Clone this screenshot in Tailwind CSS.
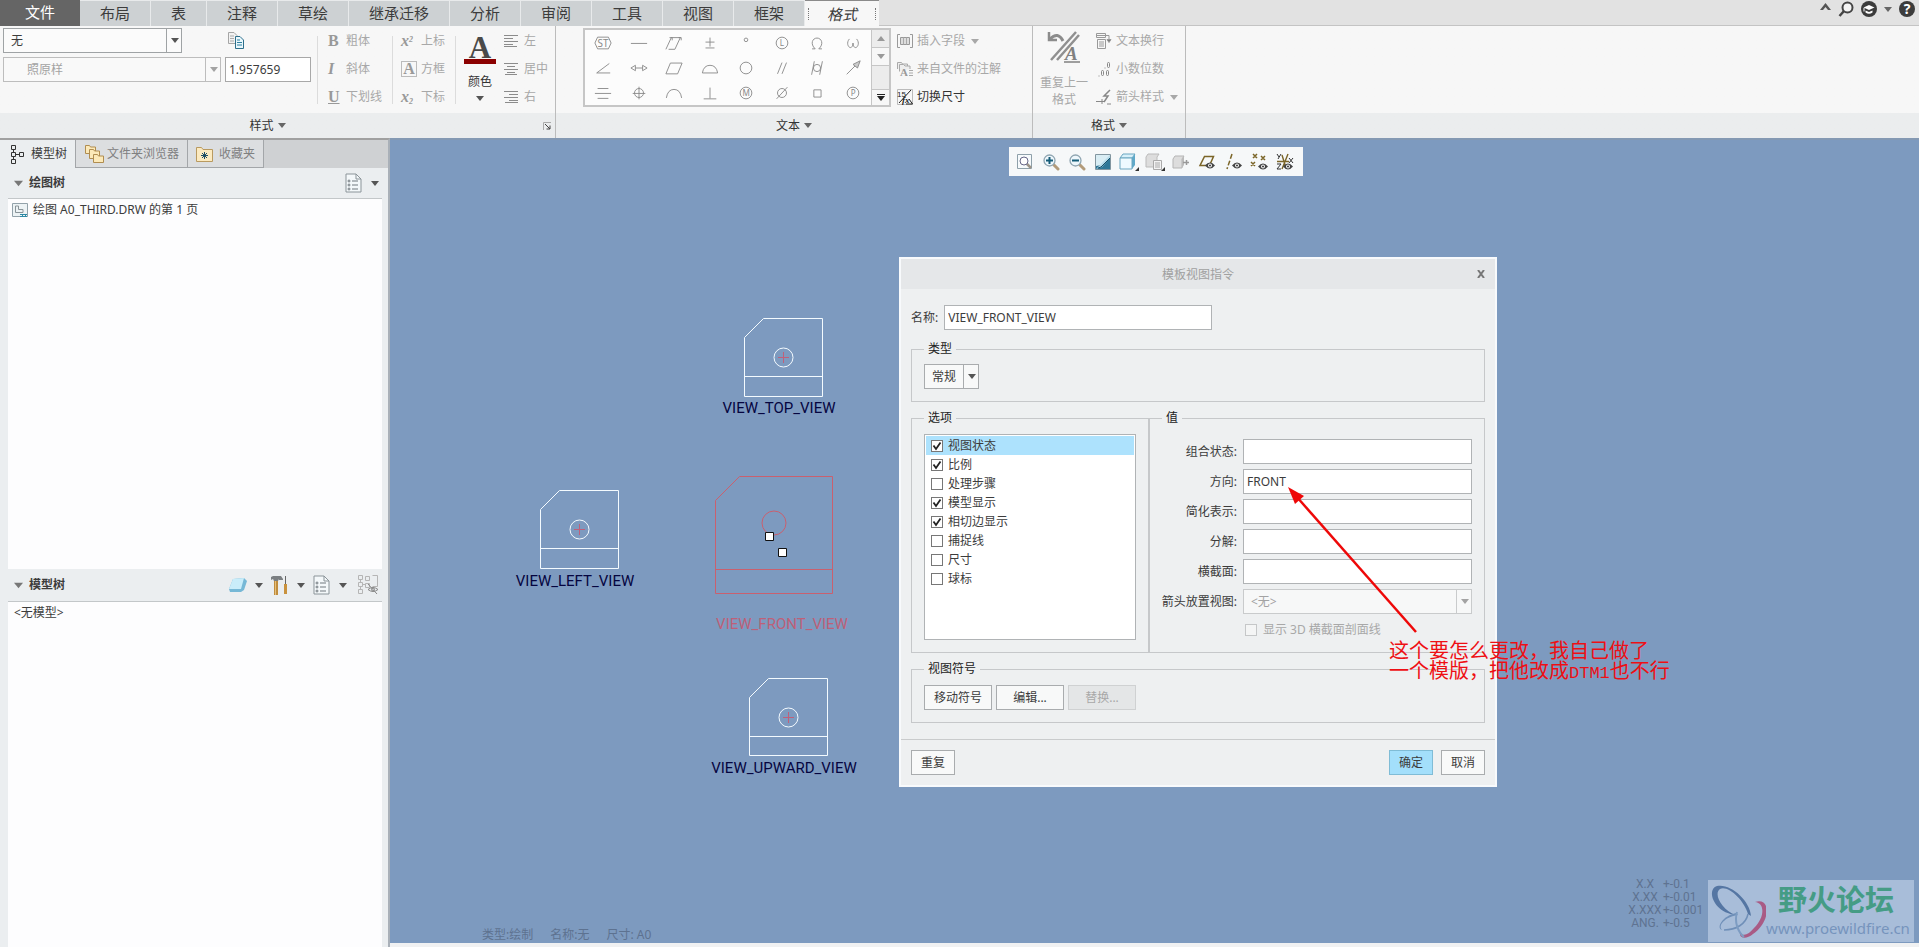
<!DOCTYPE html>
<html lang="zh-CN">
<head>
    <meta charset="UTF-8">
    <meta name="viewport" content="width=device-width, initial-scale=1.0">
    <title>模板视图指令</title>
    <script src="https://cdn.jsdelivr.net/npm/@tailwindcss/browser@4"></script>
</head>
<body class="flex h-screen flex-col overflow-hidden bg-[#f7f7f7] font-['Noto_Sans','Noto_Sans_CJK_SC',sans-serif] text-xs leading-4 text-[#3c3c3c]">

    <!-- Shared symbols -->
    <svg class="hidden">
        <symbol id="caret" viewBox="0 0 8 5"><path d="M0 0h8L4 5z" fill="currentColor"/></symbol>
        <symbol id="tick" viewBox="0 0 12 12"><path d="M2.500 5.500 5 9l4.500-6.500" fill="none" stroke="#222" stroke-width="1.800"/></symbol>
        <symbol id="eye" viewBox="0 0 10 7"><path d="M0 3.500Q5-2.500 10 3.500Q5 9.500 0 3.500z" fill="#444"/><circle cx="5" cy="3.500" r="1.900" fill="#fff"/><circle cx="5" cy="3.500" r="1" fill="#333"/></symbol>
        <symbol id="sheet" viewBox="0 0 17 20"><path d="M1 1h10l5 5v13H1z" fill="#f4f8fa" stroke="#8b9499"/><path d="M11 1v5h5" fill="none" stroke="#8b9499"/><path d="M7 8h6M7 12h6M7 16h6" stroke="#70797e"/><g fill="none" stroke="#70797e"><circle cx="4" cy="8" r="1"/><circle cx="4" cy="12" r="1"/><circle cx="4" cy="16" r="1"/></g></symbol>
        <symbol id="lens" viewBox="0 0 18 18"><path d="m11 11 5 5" stroke="#b39b7a" stroke-width="3" stroke-linecap="round"/><circle cx="7.500" cy="7.500" r="5.500" fill="#eef7fc" stroke="#8fa5b1" stroke-width="1.300"/></symbol>
    </svg>

    <!-- Ribbon tabs -->
    <nav class="flex h-[26px] shrink-0 bg-[#e2e2e2] text-[15px] leading-6">
        <a href="#" class="w-20 bg-[#656565] text-center text-white">文件</a>
        <a href="#" class="w-[71px] border-t border-r border-[#e8eaeb] bg-[#cdd1d3] text-center">布局</a>
        <a href="#" class="w-14 border-t border-r border-[#e8eaeb] bg-[#cdd1d3] text-center">表</a>
        <a href="#" class="w-[71px] border-t border-r border-[#e8eaeb] bg-[#cdd1d3] text-center">注释</a>
        <a href="#" class="w-[71px] border-t border-r border-[#e8eaeb] bg-[#cdd1d3] text-center">草绘</a>
        <a href="#" class="w-[101px] border-t border-r border-[#e8eaeb] bg-[#cdd1d3] text-center">继承迁移</a>
        <a href="#" class="w-[71px] border-t border-r border-[#e8eaeb] bg-[#cdd1d3] text-center">分析</a>
        <a href="#" class="w-[71px] border-t border-r border-[#e8eaeb] bg-[#cdd1d3] text-center">审阅</a>
        <a href="#" class="w-[71px] border-t border-r border-[#e8eaeb] bg-[#cdd1d3] text-center">工具</a>
        <a href="#" class="w-[71px] border-t border-r border-[#e8eaeb] bg-[#cdd1d3] text-center">视图</a>
        <a href="#" class="w-[71px] border-t border-r border-[#e8eaeb] bg-[#cdd1d3] text-center">框架</a>
        <a href="#" class="flex w-[74px] items-center justify-between border-t border-[#8a8a8a] bg-[#f7f7f7] px-[3px] italic">
            <span class="h-3 border-l border-dotted border-[#777]"></span>格式<span class="h-3 border-l border-dotted border-[#777]"></span>
        </a>
        <div class="flex flex-1 items-start justify-end gap-[7px] border-b border-[#c4c4c4] pt-px pr-1">
            <button aria-label="最小化功能区" class="pt-[2px]"><svg class="h-[7px] w-[11px]" viewBox="0 0 11 7"><path d="M0 7 5.500 0 11 7H8L5.500 4 3 7z" fill="#555"/></svg></button>
            <button aria-label="搜索"><svg class="size-4" viewBox="0 0 16 16"><circle cx="9.500" cy="6.500" r="5" fill="#f4f4f4" stroke="#444" stroke-width="2"/><path d="m6 10-4.500 5" stroke="#444" stroke-width="2.500"/></svg></button>
            <button aria-label="学习"><svg class="size-4" viewBox="0 0 16 16"><circle cx="8" cy="8" r="8" fill="#3c3c3c"/><path d="m2.500 6.500 5.500-2.500 5.500 2.500L8 9z" fill="#fff"/><path d="M4.500 9.500v2Q8 14 11.500 11.500v-2L8 11z" fill="#fff"/><path d="M3 7v3.500" stroke="#fff"/></svg></button>
            <button aria-label="更多" class="pt-[6px]"><svg class="h-[5px] w-2 text-[#666]"><use href="#caret"/></svg></button>
            <button aria-label="帮助" class="size-4 rounded-full bg-[#3c3c3c] text-sm leading-4 font-bold text-white">?</button>
        </div>
    </nav>

    <!-- Ribbon body -->
    <header class="flex h-28 shrink-0 bg-linear-to-b from-[#f7f7f7] from-[87px] to-[#ebedee] to-[87px]">
        <!-- Style group -->
        <section class="flex w-[556px] flex-col border-r border-[#bcbcbc]">
            <div class="flex h-[87px]">
                <div class="flex w-[317px] flex-col gap-1 pt-[2px] pl-[3px]">
                    <div class="flex items-center gap-[46px]">
                        <div class="grid w-[179px] items-center">
                            <select aria-label="样式" class="col-start-1 row-start-1 h-[25px] appearance-none border border-[#9fa3a5] bg-[#fbfbfb] px-[7px]"><option>无</option></select>
                            <span class="pointer-events-none col-start-1 row-start-1 flex h-[25px] w-4 items-center justify-center justify-self-end border-l border-[#9fa3a5]"><svg class="h-[5px] w-2 text-[#555]"><use href="#caret"/></svg></span>
                        </div>
                        <button aria-label="复制样式"><svg class="h-[17px] w-4" viewBox="0 0 16 17"><path d="M.5.5H6L9 3.500v8H.5z" fill="#f2f2f2" stroke="#a5a5a5"/><path d="M2 4h4M2 6.500h4M2 9h4" stroke="#aaa"/><path d="M7.500 4.500H12l3.500 3.500v8.500h-8z" fill="#e9f7fc" stroke="#2d6f8b"/><path d="M9 8h3M9 10.500h5M9 13h5" stroke="#2d7f9f"/></svg></button>
                    </div>
                    <div class="flex gap-1">
                        <div class="grid w-[218px] items-center text-[#a3a3a3]">
                            <select aria-label="字体" disabled class="col-start-1 row-start-1 h-[25px] appearance-none border border-[#bdbdbd] bg-[#f9f9f9] px-[23px]"><option>照原样</option></select>
                            <span class="pointer-events-none col-start-1 row-start-1 flex h-[25px] w-4 items-center justify-center justify-self-end border-l border-[#bdbdbd]"><svg class="h-[5px] w-2"><use href="#caret"/></svg></span>
                        </div>
                        <input aria-label="高度" value="1.957659" class="h-[25px] w-[86px] border border-[#a8a8a8] bg-white px-[3px]">
                    </div>
                </div>
                <div class="mt-[10px] h-[68px] w-px bg-[#dcdcdc]"></div>
                <div class="flex w-[74px] flex-col items-start pt-px pl-[10px] text-[#a8a8a8]">
                    <button class="flex h-7 items-center"><b class="w-[18px] text-left font-['Liberation_Serif',serif] text-base text-[#999]">B</b>粗体</button>
                    <button class="flex h-7 items-center"><b class="w-[18px] text-left font-['Liberation_Serif',serif] text-base text-[#999] italic">I</b>斜体</button>
                    <button class="flex h-7 items-center"><b class="w-[18px] text-left font-['Liberation_Serif',serif] text-base text-[#999] underline">U</b>下划线</button>
                </div>
                <div class="mt-[10px] h-[68px] w-px bg-[#dcdcdc]"></div>
                <div class="flex w-[62px] flex-col items-start pt-px pl-2 text-[#a8a8a8]">
                    <button class="flex h-7 items-center gap-1"><b class="w-4 text-left font-['Liberation_Serif',serif] text-base text-[#999] italic">x<sup class="text-[8px]">2</sup></b>上标</button>
                    <button class="flex h-7 items-center gap-1"><b class="size-4 border border-[#bbb] text-center font-['Liberation_Serif',serif] text-base leading-[14px] text-[#999]">A</b>方框</button>
                    <button class="flex h-7 items-center gap-1"><b class="w-4 text-left font-['Liberation_Serif',serif] text-base text-[#999] italic">x<sub class="text-[8px]">2</sub></b>下标</button>
                </div>
                <div class="mt-[10px] h-[68px] w-px bg-[#dcdcdc]"></div>
                <button class="flex h-[87px] w-12 flex-col items-center pt-[7px]">
                    <b class="h-[26px] font-['Liberation_Serif',serif] text-[31px] leading-[30px] text-[#4a4a4a]">A</b>
                    <span class="h-[5px] w-8 bg-[#8b0000]"></span>
                    <span class="mt-[10px] text-[#333]">颜色</span>
                    <svg class="mt-[6px] h-[5px] w-2 text-[#555]"><use href="#caret"/></svg>
                </button>
                <div class="flex flex-col items-start pt-px text-[#a8a8a8]">
                    <button class="flex h-7 items-center gap-[6px]"><svg class="h-3 w-[14px]" viewBox="0 0 14 12" stroke="#8c8c8c"><path d="M0 .5h14M0 3.500h9M0 6.500h14M0 9.500h9M0 11.500h13"/></svg>左</button>
                    <button class="flex h-7 items-center gap-[6px]"><svg class="h-3 w-[14px]" viewBox="0 0 14 12" stroke="#8c8c8c"><path d="M0 .5h14M3 3.500h8M0 6.500h14M3 9.500h8M1 11.500h12"/></svg>居中</button>
                    <button class="flex h-7 items-center gap-[6px]"><svg class="h-3 w-[14px]" viewBox="0 0 14 12" stroke="#8c8c8c"><path d="M0 .5h14M5 3.500h9M0 6.500h14M5 9.500h9M1 11.500h13"/></svg>右</button>
                </div>
            </div>
            <div class="flex h-[25px] items-center">
                <button class="flex flex-1 items-center justify-center gap-1 pr-2 text-[#333]">样式<svg class="h-[5px] w-2 text-[#666]"><use href="#caret"/></svg></button>
                <button aria-label="样式对话框" class="mr-1"><svg class="size-2" viewBox="0 0 8 8" fill="none" stroke="#444"><path d="M.5 8V.5H8" stroke="#aaa"/><path d="m2 2 5 5M7 3.500V7H3.500"/></svg></button>
            </div>
        </section>

        <!-- Text group -->
        <section class="flex w-[477px] flex-col border-r border-[#bcbcbc]">
            <div class="flex h-[87px]">
                <div class="mt-[2px] ml-[27px] flex h-[79px] w-[308px] border-2 border-[#c6c6c6] bg-[#fcfcfc]">
                    <div id="symbols" class="grid flex-1 grid-cols-8 grid-rows-3 text-[#999]"></div>
                    <div class="flex w-[18px] flex-col border-l border-[#c6c6c6] bg-[#ececec] text-[#999]">
                        <button aria-label="向上" class="flex h-[18px] items-center justify-center border-b border-[#c6c6c6]"><svg class="h-[5px] w-2 rotate-180"><use href="#caret"/></svg></button>
                        <button aria-label="向下" class="flex h-[18px] items-center justify-center border-b border-[#c6c6c6] bg-[#f7f7f7]"><svg class="h-[5px] w-2"><use href="#caret"/></svg></button>
                        <button aria-label="展开" class="mt-auto flex h-4 flex-col items-center justify-center gap-px border-t border-[#c6c6c6] bg-[#f7f7f7] text-[#222]"><span class="h-px w-2 bg-[#222]"></span><svg class="h-[5px] w-2"><use href="#caret"/></svg></button>
                    </div>
                </div>
                <div class="ml-[6px] flex flex-col items-start pt-px text-[#a8a8a8]">
                    <button class="flex h-7 items-center gap-1"><svg class="h-[14px] w-4" viewBox="0 0 16 14" fill="none" stroke="#999"><path d="M3 .5H.5v13H3M13 .5h2.500v13H13"/><path d="M3.500 3.500h9v7h-9z" fill="#ddd"/><path d="M6.500 3.500v7M9.500 3.500v7" stroke="#aaa"/></svg>插入字段<svg class="ml-[2px] h-[5px] w-2"><use href="#caret"/></svg></button>
                    <button class="flex h-7 items-center gap-1"><svg class="size-4" viewBox="0 0 16 16" fill="#eee" stroke="#aaa"><path d="M.5 8V1.500h4l1 1.500h5V5"/><path d="M2.500 10.500v-7h4L8 5h5v3"/><text x="3" y="15" font-family="Liberation Serif" font-weight="bold" font-size="11" fill="#999" stroke="none">A</text><path d="M12 9.500h4M12 12h4M12 14.500h4"/></svg>来自文件的注解</button>
                    <button class="flex h-7 items-center gap-1 text-[#333]"><svg class="size-4" viewBox="0 0 16 16"><path d="M.5.5h15v15H.5z" fill="none" stroke="#bbb"/><text x="0" y="8" font-family="Liberation Sans" font-size="8" fill="#222">15</text><text x="5" y="14" font-family="Liberation Serif" font-size="9" font-style="italic" font-weight="bold" fill="#222">fx</text><path d="M2 14 14 1M12 10l3.500 5M9 15h6.500" stroke="#222"/></svg>切换尺寸</button>
                </div>
            </div>
            <div class="flex h-[25px] items-center justify-center">
                <button class="flex items-center gap-1 text-[#333]">文本<svg class="h-[5px] w-2 text-[#666]"><use href="#caret"/></svg></button>
            </div>
        </section>

        <!-- Format group -->
        <section class="flex w-[153px] flex-col border-r border-[#bcbcbc] text-[#a8a8a8]">
            <div class="flex h-[87px] gap-2 pl-[7px]">
                <button class="flex w-12 flex-col items-center pt-[5px] leading-[17px]">
                    <svg class="h-8 w-[34px]" viewBox="0 0 34 32" fill="none"><path d="M2 1v8h8" stroke="#8c8c8c" stroke-width="2.500"/><path d="M3 8Q11 0 16 10" stroke="#8c8c8c" stroke-width="3"/><path d="M29 1 4 29M32 4 10 29" stroke="#909090" stroke-width="2.500"/><text x="18" y="29" font-family="Liberation Serif" font-weight="bold" font-style="italic" font-size="19" fill="#808080">A</text><path d="M17 31h16" stroke="#808080" stroke-width="1.500"/></svg>
                    <span class="mt-[11px]">重复上一<br>格式</span>
                </button>
                <div class="flex flex-col items-start pt-px">
                    <button class="flex h-7 items-center gap-1"><svg class="size-4" viewBox="0 0 16 16" fill="none" stroke="#999"><path d="M.5.5h9v4h-9zM1 2.500h8M10 2.500h3v6"/><path d="m11 6.500 2 3 2-3z" fill="#777"/><path d="M1.500 6.500h8v9h-8zM3 9h5M3 11h5M3 13h5"/></svg>文本换行</button>
                    <button class="flex h-7 items-center gap-1"><svg class="size-4" viewBox="0 0 16 16" fill="none" stroke="#888"><path d="M3 14.500v1M9 6.500v1"/><rect x="11.500" y="1.500" width="2" height="5" rx="1"/><rect x="5.500" y="9.500" width="2" height="5" rx="1"/><rect x="10.500" y="9.500" width="2" height="5" rx="1"/></svg>小数位数</button>
                    <button class="flex h-7 items-center gap-1"><svg class="size-4" viewBox="0 0 16 16" fill="none" stroke="#888"><path d="M14 1 8 7h4l-4 6" stroke-width="1.500"/><path d="M0 12.500h9M11 15h4M6 10v5"/></svg>箭头样式<svg class="ml-[2px] h-[5px] w-2"><use href="#caret"/></svg></button>
                </div>
            </div>
            <div class="flex h-[25px] items-center justify-center">
                <button class="flex items-center gap-1 text-[#333]">格式<svg class="h-[5px] w-2 text-[#666]"><use href="#caret"/></svg></button>
            </div>
        </section>
    </header>

    <main class="flex min-h-0 flex-1">
        <!-- Navigator -->
        <aside class="flex w-[390px] shrink-0 flex-col border-t-2 border-r-2 border-t-[#a0a0a0] border-r-[#a9b0b8] bg-[#ebeef0]">
            <div class="flex h-7 shrink-0 bg-[#cfd1d3]">
                <button class="flex w-[75px] items-center gap-[7px] bg-[#ebeef0] pl-[11px]"><svg class="h-5 w-[13px]" viewBox="0 0 13 20" fill="none" stroke="#333"><path d="M.5 1.500h4v4h-4zM.5 8.500h4v4h-4zM.5 15.500h4v4h-4zM8.500 8.500h4v4h-4zM2.500 5.500v3M2.500 12.500v3M4.500 10.500h4"/></svg>模型树</button>
                <button class="flex w-[113px] items-center gap-[3px] border border-t-0 border-[#a3a6a9] bg-[#dcdee0] pl-2 text-[#808080]"><svg class="size-5 shrink-0" viewBox="0 0 20 20" fill="#fce9b8" stroke="#b08d50"><path d="M1.500 9.500v-8h4l1 1.500h5v6.500z"/><path d="M5.500 14.500v-9h4l1 1.500h5v7.500z"/><path d="M9.500 18.500v-8h4l1 1.500h5v6.500z"/></svg>文件夹浏览器</button>
                <button class="flex w-[76px] items-center gap-[6px] border border-t-0 border-l-0 border-[#a3a6a9] bg-[#dcdee0] pl-2 text-[#808080]"><svg class="h-4 w-[17px]" viewBox="0 0 17 16"><path d="M.5 15.500V1.500h5L7 3.500h9.500v12z" fill="#fceac0" stroke="#b99a60"/><path d="M8.500 6v7M5 9.500h7M6 7l5 5M11 7l-5 5" stroke="#1f4f66"/></svg>收藏夹</button>
            </div>
            <div class="flex h-[30px] shrink-0 items-center pr-[9px] pl-[14px]">
                <svg class="h-[7px] w-[9px] text-[#777]"><use href="#caret"/></svg>
                <h2 class="ml-[6px] flex-1 font-bold">绘图树</h2>
                <button aria-label="设置" class="flex items-center gap-[9px]"><svg class="h-5 w-[17px]"><use href="#sheet"/></svg><svg class="h-[5px] w-2 text-[#555]"><use href="#caret"/></svg></button>
            </div>
            <div class="mr-[6px] ml-2 flex-[370] border-t border-[#c3c7c9] bg-[#fdfdfe] pt-[3px] pl-1">
                <a href="#" class="flex h-4 items-center gap-[5px]"><svg class="size-4" viewBox="0 0 16 16" fill="none"><path d="M.5 1.500h15v13H.5z" fill="#edf3f5" stroke="#93a2aa"/><path d="M3.500 4v6.500H11v-3H6.500V4z" stroke="#8a9499"/><path d="M8 12.500h7M8 14.500h7M10.500 12v3M13.500 12v3" stroke="#2d8aa5"/></svg>绘图 A0_THIRD.DRW 的第 1 页</a>
            </div>
            <div class="mr-[6px] ml-2 flex h-8 shrink-0 items-center pl-[6px]">
                <svg class="h-[7px] w-[9px] text-[#777]"><use href="#caret"/></svg>
                <h2 class="ml-[6px] flex-1 font-bold">模型树</h2>
                <div class="flex items-center gap-2 pr-1">
                    <button aria-label="显示" class="flex items-center gap-[7px]"><svg class="h-4 w-5" viewBox="0 0 20 16"><path d="M1 12 5 2l11-1 3 3-3 9-3 2H2z" fill="#76b8d6"/><path d="M1 12 5 2l11-1-3 11z" fill="#c9edfa"/></svg><svg class="h-[5px] w-2 text-[#555]"><use href="#caret"/></svg></button>
                    <button aria-label="工具" class="flex items-center gap-[9px]"><svg class="h-5 w-[17px]" viewBox="0 0 17 20"><path d="M0 5V2l2-1h8l2 3v1H8V4L7 6H3L2 4z" fill="#7b7f82"/><path d="M3 6h4v14H3z" fill="#c08d3e"/><path d="M4 6h1v14H4z" fill="#e6c07c"/><path d="M14 1h1v9h-1z" fill="#666"/><path d="M13 9h3v10h-3z" fill="#c9923e"/></svg><svg class="h-[5px] w-2 text-[#555]"><use href="#caret"/></svg></button>
                    <button aria-label="树设置" class="flex items-center gap-[9px]"><svg class="h-5 w-[17px]"><use href="#sheet"/></svg><svg class="h-[5px] w-2 text-[#555]"><use href="#caret"/></svg></button>
                    <button aria-label="隐藏项" class="pl-[3px]"><svg class="size-5" viewBox="0 0 20 20" fill="none" stroke="#b5b5b5"><path d="M.5.5h4v4h-4zM.5 7.500h4v4h-4zM.5 14.500h4v4h-4zM7.500 1.500h4v4h-4zM7.500 8.500h4v4h-4zM14.500.5h5v11h-5M4.500 9.500h3M2.500 4.500v3M2.500 11.500v3"/><path d="M10 14.500q5-4 10 0-5 4-10 0zM10 9l9 10" stroke="#888"/><circle cx="15" cy="14.500" r="1.500" stroke="#888"/></svg></button>
                </div>
            </div>
            <div class="mr-[6px] ml-2 flex-[344] border-t border-[#c3c7c9] bg-[#fdfdfe] px-[6px] pt-[3px]">&lt;无模型&gt;</div>
        </aside>

        <!-- Drawing canvas -->
        <div class="relative flex-1 overflow-hidden border-t-2 border-b-4 border-t-[#8499b3] border-b-[#f0f1f2] bg-[#7d9abf]">
            <svg class="absolute inset-0 size-full font-['Roboto','Liberation_Sans',sans-serif] text-[15px]" fill="none">
                <g id="view-top" transform="translate(354 178)">
                    <path d="M19.500.5h59v78H.5v-59zM.5 58.500h78" stroke="#f4fbff"/><circle cx="39.500" cy="39.500" r="9.500" stroke="#f4fbff"/><path d="M34 39.500h11M39.500 34v11" stroke="#c0607a"/>
                    <text x="35" y="95" text-anchor="middle" fill="#05053f">VIEW_TOP_VIEW</text>
                </g>
                <g id="view-left" transform="translate(150 350)">
                    <path d="M19.500.5h59v78H.5v-59zM.5 58.500h78" stroke="#f4fbff"/><circle cx="39.500" cy="39.500" r="9.500" stroke="#f4fbff"/><path d="M34 39.500h11M39.500 34v11" stroke="#c0607a"/>
                    <text x="35" y="96" text-anchor="middle" fill="#05053f">VIEW_LEFT_VIEW</text>
                </g>
                <g id="view-upward" transform="translate(359 538)">
                    <path d="M19.500.5h59v77H.5v-58zM.5 58.500h78" stroke="#f4fbff"/><circle cx="39.500" cy="39.500" r="9.500" stroke="#f4fbff"/><path d="M34 39.500h11M39.500 34v11" stroke="#c0607a"/>
                    <text x="35" y="95" text-anchor="middle" fill="#05053f">VIEW_UPWARD_VIEW</text>
                </g>
                <g id="view-front" transform="translate(325 336)">
                    <path d="M24.500.5h93v117H.5v-93zM.5 93.500h117" stroke="#c9606f"/><circle cx="59" cy="47" r="12" stroke="#c9606f"/>
                    <path d="M50.500 56.500h8v8h-8zM63.500 72.500h8v8h-8z" fill="#fff" stroke="#111"/>
                    <text x="67" y="153" text-anchor="middle" fill="#bd6078">VIEW_FRONT_VIEW</text>
                </g>
            </svg>

            <p class="absolute bottom-0 left-[92px] flex gap-[17px] text-[#5d7290]"><span>类型:绘制</span><span>名称:无</span><span>尺寸: A0</span></p>

            <!-- In-graphics toolbar -->
            <div class="absolute top-[7px] left-[619px] flex h-[29px] items-center bg-[#f6f8f9] pr-[5px] pl-[3px]">
                <button aria-label="重新调整" class="flex w-[26px] justify-center"><svg class="size-[18px]" viewBox="0 0 18 18"><path d="M1.500 1.500h14v14h-14z" fill="#f6fafc" stroke="#8ea0aa"/><path d="m10 10 5 5" stroke="#9c9489" stroke-width="2.500"/><circle cx="8" cy="8" r="4" fill="#fff" stroke="#668"/></svg></button>
                <button aria-label="放大" class="flex w-[26px] justify-center"><svg class="size-[18px]" viewBox="0 0 18 18"><use href="#lens"/><path d="M4 7.500h7M7.500 4v7" stroke="#155c78" stroke-width="2"/></svg></button>
                <button aria-label="缩小" class="flex w-[26px] justify-center"><svg class="size-[18px]" viewBox="0 0 18 18"><use href="#lens"/><path d="M4 7.500h7" stroke="#155c78" stroke-width="2"/></svg></button>
                <button aria-label="重画" class="flex w-[26px] justify-center"><svg class="size-[18px]" viewBox="0 0 18 18"><path d="M1.500 1.500h15v15h-15z" fill="#d9edf4" stroke="#8296a0"/><path d="M2 16v-3l6-1 8-9v13z" fill="#2e7797"/><path d="m2 16 6-2 8-9V2L6 12z" fill="#b8dcea"/><path d="m4 15 3-1 9-9" stroke="#174f68" fill="none"/></svg></button>
                <button aria-label="显示样式" class="flex w-[26px] justify-center"><svg class="h-[18px] w-5" viewBox="0 0 20 18"><path d="M1 5 4 1h12l-3 4z" fill="#d7f0fa" stroke="#6aa6c0"/><path d="M13 5l3-4v11l-3 4z" fill="#5fa9c9"/><path d="M1 5h12v11H1z" fill="#eefaff" stroke="#6aa6c0"/><path d="M20 14v4h-4z" fill="#333"/></svg></button>
                <button aria-label="已保存方向" class="flex w-[26px] justify-center"><svg class="h-[18px] w-5" viewBox="0 0 20 18"><path d="M1 4 3 1h11l-2 3v10H1z" fill="#ddd" stroke="#bbb"/><path d="M8.500 7.500h8v9h-8z" fill="#f3f3f3" stroke="#aaa"/><path d="M10 10h5M10 12h5M10 14h5" stroke="#aaa"/><path d="M20 14v4h-4z" fill="#333"/></svg></button>
                <button aria-label="视图管理器" class="flex w-[26px] justify-center"><svg class="size-[18px]" viewBox="0 0 18 18"><path d="M1 6 3 3h9l-2 3v9H1z" fill="#ddd" stroke="#b5b5b5"/><path d="M10 6l2-3v9l-2 3z" fill="#bbb"/><path d="M11 9.500h6M14.500 7v5" stroke="#999" stroke-width="1.500" fill="none"/></svg></button>
                <button aria-label="平面显示" class="flex w-[26px] justify-center"><svg class="size-[18px]" viewBox="0 0 18 18"><path d="M6.500 3.500h9l-4 9H2z" fill="none" stroke="#7b6528" stroke-width="1.500"/><use href="#eye" x="7" y="9" width="10" height="7"/></svg></button>
                <button aria-label="轴显示" class="flex w-[26px] justify-center"><svg class="size-[18px]" viewBox="0 0 18 18"><path d="M8 1 3 16" stroke="#7b6528" stroke-width="1.500" stroke-dasharray="5 2"/><use href="#eye" x="8" y="9" width="10" height="7"/></svg></button>
                <button aria-label="点显示" class="flex w-[26px] justify-center"><svg class="size-[18px]" viewBox="0 0 18 18"><path d="m3 1 4 4M7 1 3 5M11 3l4 4M15 3l-4 4M1 9l4 4M5 9l-4 4" stroke="#7b6528" stroke-width="1.500"/><use href="#eye" x="8" y="10" width="10" height="7"/></svg></button>
                <button aria-label="坐标系显示" class="flex w-[26px] justify-center"><svg class="size-[18px]" viewBox="0 0 18 18" fill="none"><path d="M1 8.500h12M6 2l4 13M12 1 6 16" stroke="#7b6528" stroke-width="1.400"/><path d="m1 1 2 3M5 1 2 6M13 5l4 5M17 5l-4 5M1 11h4l-4 5h4" stroke="#333"/><use href="#eye" x="7" y="10" width="10" height="7"/></svg></button>
            </div>

            <!-- Template view dialog -->
            <form class="absolute top-[117px] left-[509px] flex w-[598px] flex-col border-2 border-[#f8fafc] bg-[#eef0f1]">
                <div class="grid h-[30px] grid-cols-[1fr_auto_1fr] items-center bg-[#e5e7e9]">
                    <h1 class="col-start-2 pt-px text-[#a0a0a0]">模板视图指令</h1>
                    <button type="button" aria-label="关闭" class="mr-[10px] justify-self-end"><svg class="size-2" viewBox="0 0 8 8"><path d="m1 0 6 8M7 0 1 8" stroke="#777" stroke-width="2"/></svg></button>
                </div>
                <div class="flex flex-col px-[10px] pt-4">
                    <div class="flex items-center gap-[6px]">
                        <label for="name">名称:</label>
                        <input id="name" value="VIEW_FRONT_VIEW" class="h-[25px] w-[268px] border border-[#b0b3b5] bg-white px-[3px]">
                    </div>
                    <fieldset class="mt-[11px] border border-[#c6c8ca] px-3 pt-[7px] pb-3">
                        <legend class="px-1 text-[#222]">类型</legend>
                        <div class="grid w-[55px] items-center">
                            <select aria-label="类型" class="col-start-1 row-start-1 h-[25px] appearance-none border border-[#a9acae] bg-[#f8f9f9] px-[7px]"><option>常规</option></select>
                            <span class="pointer-events-none col-start-1 row-start-1 flex h-[25px] w-4 items-center justify-center justify-self-end border-l border-[#a9acae]"><svg class="h-[5px] w-2 text-[#555]"><use href="#caret"/></svg></span>
                        </div>
                    </fieldset>
                    <div class="mt-2 flex">
                        <fieldset class="w-[238px] border border-[#c6c8ca] px-3 pt-2 pb-3">
                            <legend class="px-1 text-[#222]">选项</legend>
                            <div id="options" class="h-[206px] border border-[#b0b3b5] bg-white p-px"></div>
                        </fieldset>
                        <fieldset class="flex-1 border border-[#c6c8ca] px-3">
                            <legend class="px-1 text-[#222]">值</legend>
                            <div class="mt-[13px] grid grid-cols-[75px_1fr] items-center gap-x-[6px] gap-y-[5px]">
                                <label for="state" class="justify-self-end">组合状态:</label>
                                <input id="state" class="h-[25px] min-w-0 border border-[#b0b3b5] bg-white px-[3px]">
                                <label for="direction" class="justify-self-end">方向:</label>
                                <input id="direction" value="FRONT" class="h-[25px] min-w-0 border border-[#b0b3b5] bg-white px-[3px]">
                                <label for="simplified" class="justify-self-end">简化表示:</label>
                                <input id="simplified" class="h-[25px] min-w-0 border border-[#b0b3b5] bg-white px-[3px]">
                                <label for="explode" class="justify-self-end">分解:</label>
                                <input id="explode" class="h-[25px] min-w-0 border border-[#b0b3b5] bg-white px-[3px]">
                                <label for="section" class="justify-self-end">横截面:</label>
                                <input id="section" class="h-[25px] min-w-0 border border-[#b0b3b5] bg-white px-[3px]">
                                <label for="arrows" class="justify-self-end whitespace-nowrap">箭头放置视图:</label>
                                <div class="grid items-center text-[#a3a3a3]">
                                    <select id="arrows" disabled class="col-start-1 row-start-1 h-[25px] appearance-none border border-[#c9cbcc] bg-[#f7f8f8] px-[7px]"><option>&lt;无&gt;</option></select>
                                    <span class="pointer-events-none col-start-1 row-start-1 flex h-[25px] w-4 items-center justify-center justify-self-end border-l border-[#c9cbcc]"><svg class="h-[5px] w-2"><use href="#caret"/></svg></span>
                                </div>
                                <label class="col-start-2 mt-[3px] flex items-center gap-[6px] pl-[2px] text-[#a8a8a8]"><input type="checkbox" disabled class="size-3 appearance-none border border-[#c5c7c8] bg-[#f4f5f5]">显示 3D 横截面剖面线</label>
                            </div>
                        </fieldset>
                    </div>
                    <fieldset class="mt-2 flex gap-1 border border-[#c6c8ca] px-3 pt-2 pb-3">
                        <legend class="px-1 text-[#222]">视图符号</legend>
                        <button type="button" class="h-[25px] w-[68px] border border-[#a9acae] bg-[#f8f9f9]">移动符号</button>
                        <button type="button" class="h-[25px] w-[68px] border border-[#a9acae] bg-[#f8f9f9]">编辑...</button>
                        <button type="button" disabled class="h-[25px] w-[68px] border border-[#cfd1d2] bg-[#e4e6e7] text-[#a8a8a8]">替换...</button>
                    </fieldset>
                </div>
                <div class="mt-4 flex gap-2 border-t border-[#c9cbcc] p-[10px]">
                    <button type="button" class="mr-auto h-[25px] w-11 border border-[#a9acae] bg-[#f8f9f9]">重复</button>
                    <button type="button" class="h-[25px] w-11 border border-[#7fbcd6] bg-[#a3dffb]">确定</button>
                    <button type="button" class="h-[25px] w-11 border border-[#a9acae] bg-[#f8f9f9]">取消</button>
                </div>
            </form>

            <!-- Annotation -->
            <svg class="pointer-events-none absolute top-[347px] left-[898px] h-[146px] w-[130px]" viewBox="0 0 130 146"><path d="M128 145 8 9" stroke="#ee0808" stroke-width="2.500"/><path d="M0 0 16 9 7 17z" fill="#ee0808"/></svg>
            <p class="absolute top-[501px] left-[999px] text-xl leading-5 whitespace-nowrap text-[#ee0f14]">这个要怎么更改，我自己做了<br>一个模版，把他改成<span class="font-['Liberation_Mono',monospace] text-[17px]">DTM1</span>也不行</p>

            <!-- Tolerance block -->
            <dl class="absolute right-[212px] bottom-[14px] grid grid-cols-[36px_44px] gap-y-px font-['Roboto',sans-serif] text-xs leading-3 text-[#5f7391]">
                <dt class="text-center">X.X</dt><dd>+-0.1</dd>
                <dt class="text-center">X.XX</dt><dd>+-0.01</dd>
                <dt class="text-center">X.XXX</dt><dd>+-0.001</dd>
                <dt class="text-center">ANG.</dt><dd>+-0.5</dd>
            </dl>

            <!-- Forum badge -->
            <div class="absolute right-[5px] bottom-px flex h-[62px] w-[206px] bg-[#a8bdd9]">
                <svg class="h-[62px] w-[58px] shrink-0" viewBox="0 0 58 62" fill="none">
                    <path d="M43 36C42 20 22 3 9 6C-2 9 5 33 28 35C14 30 5 14 12 9C20 5 36 20 40 34z" fill="#5576a3"/>
                    <path d="M28 33C14 36 8 48 14 50C9 44 20 36 30 35z" fill="#6f8fb8"/>
                    <path d="M40 34C38 44 28 50 16 50" stroke="#6f8fb8" stroke-width="1.500"/>
                    <path d="M47 22C64 17 62 43 45 54C38 60 31 58 32 53C36 57 41 54 46 48C57 37 57 23 47 22z" fill="#a95b85"/>
                    <path d="M29 32C26 42 30 52 36 57" stroke="#7d9cc2" stroke-width="2"/>
                </svg>
                <div class="flex flex-1 flex-col items-center pr-1">
                    <b class="mt-[2px] pr-1 text-[29px] leading-9 text-[#459c85]">野火论坛</b>
                    <span class="text-[15px] leading-5 text-[#7694bd]">www.proewildfire.cn</span>
                </div>
            </div>
        </div>
    </main>

    <script>
        // Drawing symbols of the text gallery, each on a 20x20 grid
        const symbols = [
            '<path d="M4 3.500h12l3 6.500-3 6.500H4L1 10z"/><text x="4" y="14" font-size="11">ST</text>',
            '<path d="M1 10.500h18"/>',
            '<path d="M1 17 7 4h10L11 17M5 4h3v3M15 4h3v3M4 17h7"/>',
            '<path d="M5 9h10M10 4v10M5 15.500h10"/>',
            '<circle cx="10" cy="6.500" r="2"/>',
            '<circle cx="10" cy="10" r="6.500"/><text x="7.500" y="13.500" font-size="9">L</text>',
            '<path d="M4.500 16.500h3.500C2 11 5 4.500 10 4.500S18 11 12 16.500h3.500"/>',
            '<path d="M6 5.500C2 10 5 16 8 15q2-1 2-5 0 4 2 5c3 1 6-5 2-9.500"/>',
            '<path d="M17 5 3 15.500h15"/>',
            '<path d="M1 10l5-3v6zM19 10l-5-3v6zM6 10h8"/>',
            '<path d="M6 4.500h13l-5 12H1z"/>',
            '<path d="M1.500 15.500Q3 7 10 7t8.500 8.500z"/>',
            '<circle cx="10" cy="10" r="6.500"/>',
            '<path d="M5 16.500 10 4M10 16.500 15 4"/>',
            '<circle cx="10" cy="10" r="4"/><path d="M4 17.500 7 2.500M13 17.500 16 2.500"/>',
            '<path d="M3 17 13 7"/><path d="m18 2-3 8-5-4z" fill="#ccc"/>',
            '<path d="M4 5h12M1 10.500h18M4 16h12"/>',
            '<circle cx="10" cy="10" r="5"/><path d="M3 10.500h14M10 3v14"/>',
            '<path d="M1.500 15.500Q3 6 10 6t8.500 9.500"/>',
            '<path d="M10 4v12M3 16.500h14"/>',
            '<circle cx="10" cy="10" r="6.500"/><text x="6" y="13.500" font-size="9">M</text>',
            '<circle cx="10" cy="10" r="5"/><path d="M4 16.500 16 3.500"/>',
            '<path d="M6.500 6.500h8v8h-8z"/>',
            '<circle cx="10" cy="10" r="6.500"/><text x="7.500" y="13.500" font-size="9">P</text>'
        ];
        document.getElementById('symbols').innerHTML = symbols.map((s, i) => `
            <button aria-label="符号 ${i + 1}" class="flex items-center justify-center">
                <svg class="size-[18px] [&_text]:fill-[#888] [&_text]:stroke-none" viewBox="0 0 20 20" fill="none" stroke="#888">${s}</svg>
            </button>`).join('');

        // View options list
        const options = [
            ['视图状态', true], ['比例', true], ['处理步骤', false], ['模型显示', true],
            ['相切边显示', true], ['捕捉线', false], ['尺寸', false], ['球标', false]
        ];
        document.getElementById('options').innerHTML = options.map(([name, on], i) => `
            <label class="flex h-[19px] items-center gap-[5px] pl-[5px] ${i === 0 ? 'bg-[#ade2fd]' : ''}">
                <span class="grid size-3">
                    <input type="checkbox" ${on ? 'checked' : ''} class="peer col-start-1 row-start-1 size-3 appearance-none border border-[#777] bg-white">
                    <svg class="pointer-events-none col-start-1 row-start-1 hidden size-3 peer-checked:block"><use href="#tick"/></svg>
                </span>${name}
            </label>`).join('');
    </script>
</body>
</html>
